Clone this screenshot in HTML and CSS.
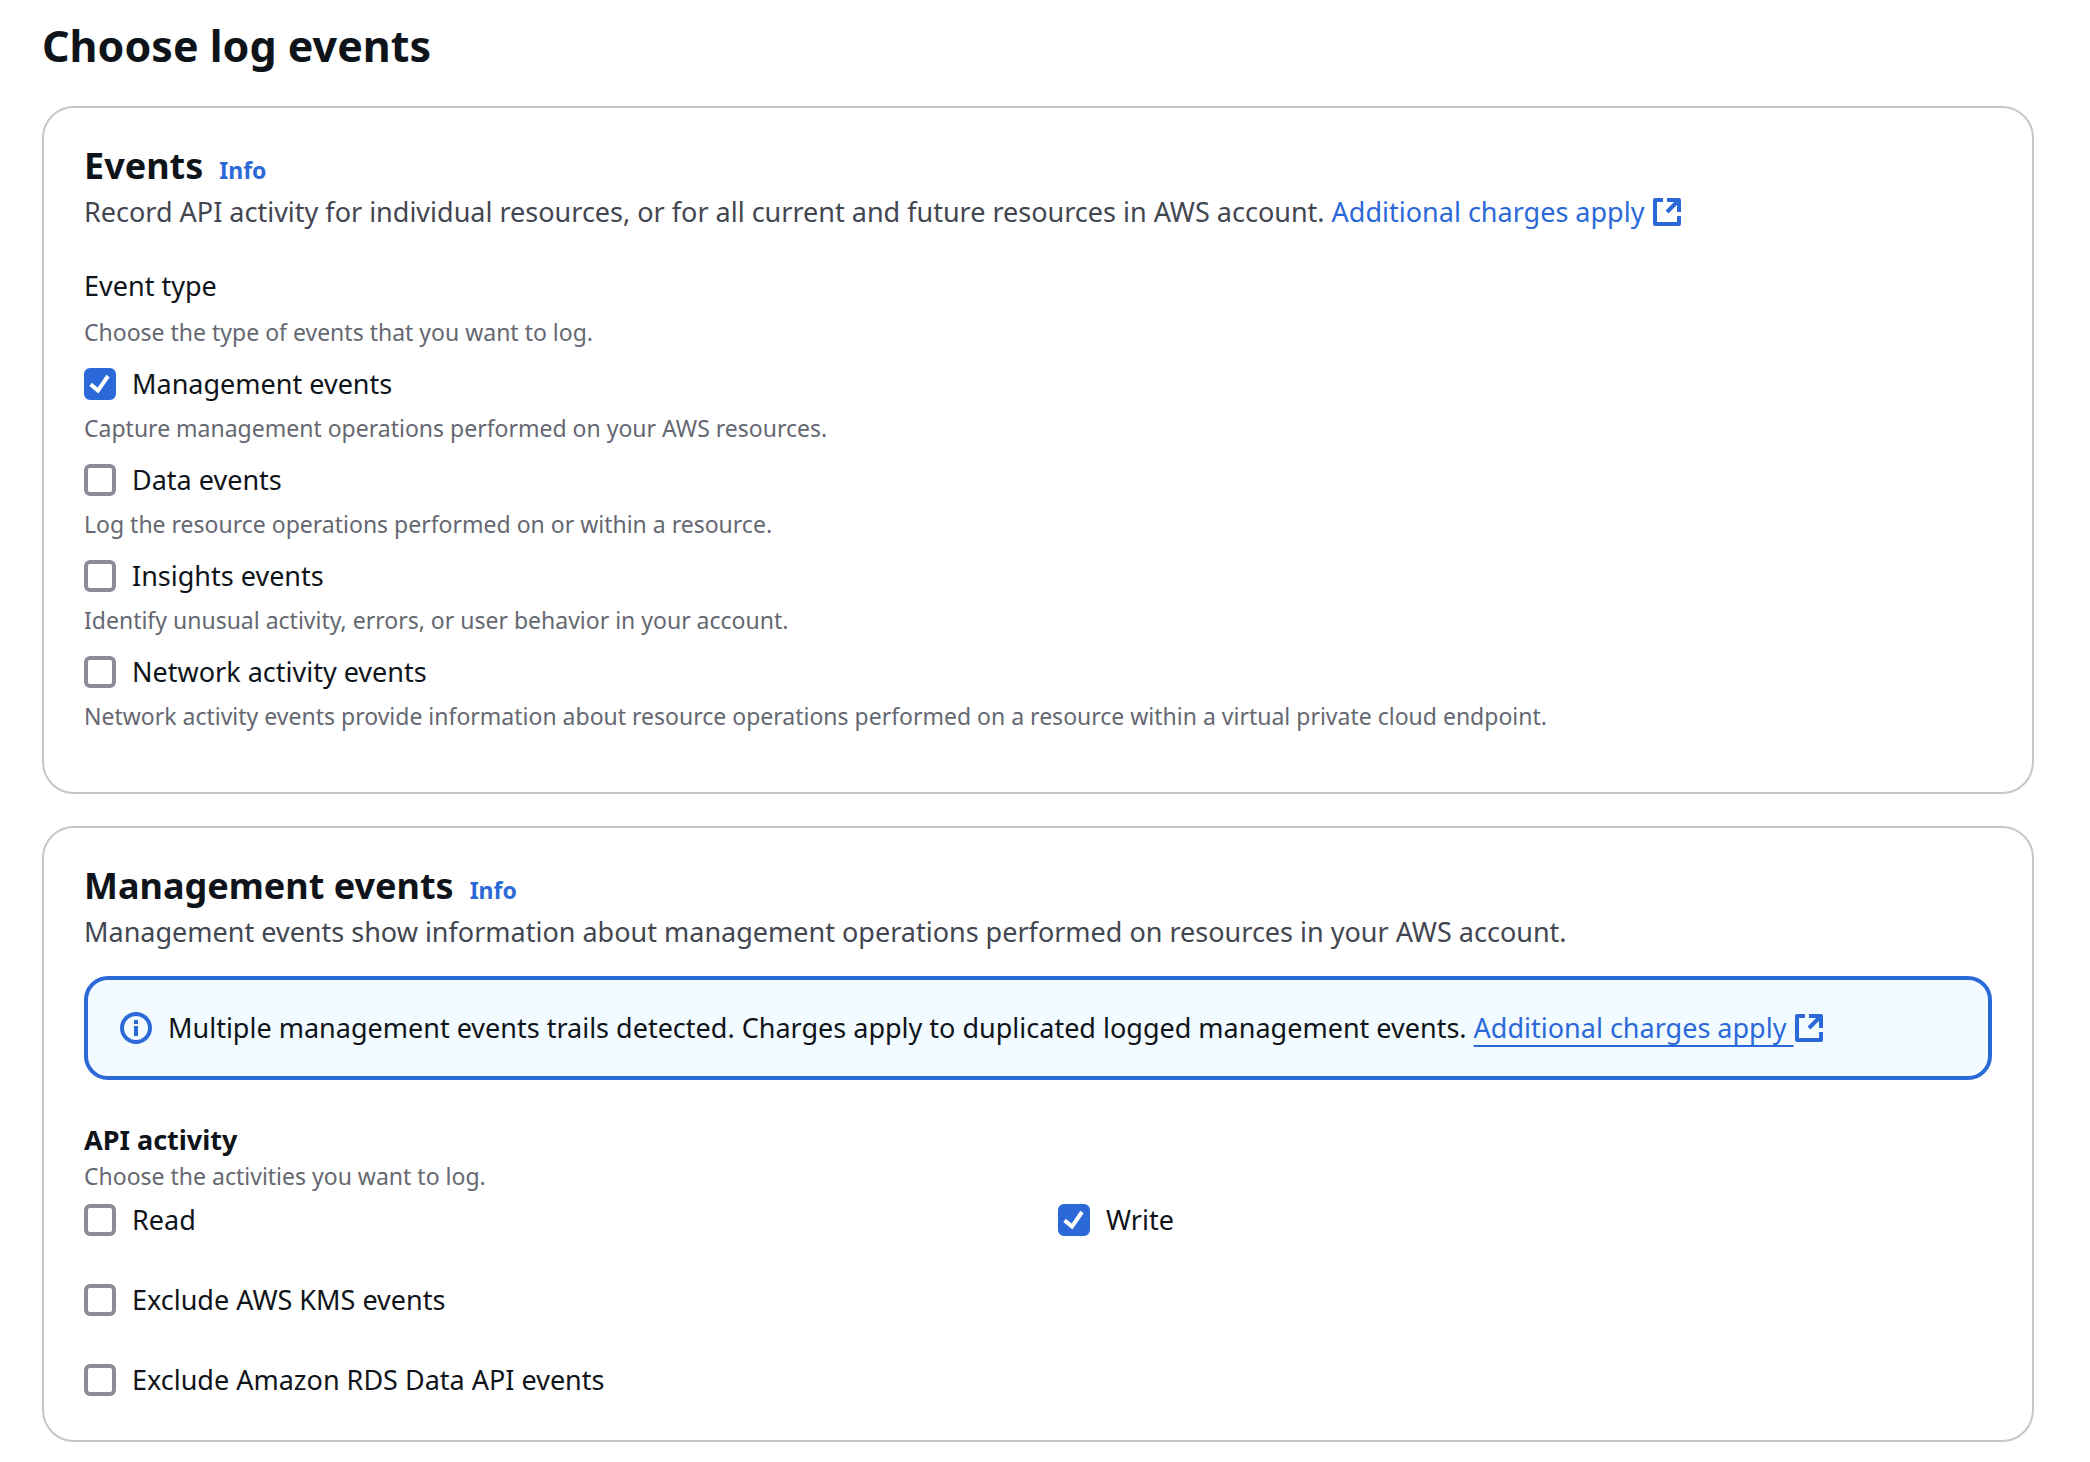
FILE: index.html
```html
<!DOCTYPE html>
<html lang="en">
<head>
    <meta charset="UTF-8">
    <meta name="viewport" content="width=device-width, initial-scale=1.0">
    <title>Choose log events</title>
    <link rel="stylesheet" href="styles.css">
</head>
<body>
    <!-- shared icon -->
    <svg class="sprite" aria-hidden="true">
        <symbol id="external" viewBox="0 0 16 16">
            <path d="M14 8V2H8M6 2H2v12h12v-4M14 2 8 8" fill="none" stroke="currentColor" stroke-width="2" stroke-linejoin="round"/>
        </symbol>
    </svg>

    <main>
        <h1>Choose log events</h1>

        <section class="card events">
            <div class="card-title">
                <h2>Events</h2>
                <a class="info" href="#">Info</a>
            </div>
            <p class="description">Record API activity for individual resources, or for all current and future resources in AWS account. <a class="external" href="#">Additional charges apply&nbsp;<svg class="icon"><use href="#external"/></svg></a></p>

            <fieldset class="event-types">
                <legend>Event type</legend>
                <p class="hint">Choose the type of events that you want to log.</p>
                <div class="option">
                    <label class="check"><input type="checkbox" checked>Management events</label>
                    <p class="hint">Capture management operations performed on your AWS resources.</p>
                </div>
                <div class="option">
                    <label class="check"><input type="checkbox">Data events</label>
                    <p class="hint">Log the resource operations performed on or within a resource.</p>
                </div>
                <div class="option">
                    <label class="check"><input type="checkbox">Insights events</label>
                    <p class="hint">Identify unusual activity, errors, or user behavior in your account.</p>
                </div>
                <div class="option">
                    <label class="check"><input type="checkbox">Network activity events</label>
                    <p class="hint">Network activity events provide information about resource operations performed on a resource within a virtual private cloud endpoint.</p>
                </div>
            </fieldset>
        </section>

        <section class="card">
            <div class="card-title">
                <h2>Management events</h2>
                <a class="info" href="#">Info</a>
            </div>
            <p class="description">Management events show information about management operations performed on resources in your AWS account.</p>

            <div class="alert">
                <svg class="icon" viewBox="0 0 16 16" aria-hidden="true">
                    <circle cx="8" cy="8" r="7" fill="none" stroke="currentColor" stroke-width="2"/>
                    <path d="M8 4v2M8 7v5" fill="none" stroke="currentColor" stroke-width="2"/>
                </svg>
                <p>Multiple management events trails detected. Charges apply to duplicated logged management events. <a class="external" href="#"><span class="underlined">Additional charges apply&nbsp;</span><svg class="icon"><use href="#external"/></svg></a></p>
            </div>

            <fieldset>
                <legend class="strong">API activity</legend>
                <p class="hint">Choose the activities you want to log.</p>
                <div class="activities">
                    <label class="check"><input type="checkbox">Read</label>
                    <label class="check"><input type="checkbox" checked>Write</label>
                    <label class="check wide"><input type="checkbox">Exclude AWS KMS events</label>
                    <label class="check wide"><input type="checkbox">Exclude Amazon RDS Data API events</label>
                </div>
            </fieldset>
        </section>
    </main>
</body>
</html>
```

FILE: styles.css
```css
:root {
    --link: #2b69d8;
    --text: #0f141a;
    --secondary: #424650;
    --hint: #656871;
    --border: #c6c6cd;
    --control: #8c8c94;
}

* {
    margin: 0;
    padding: 0;
    box-sizing: border-box;
}

body {
    background: #fff;
    color: var(--text);
    font-family: "Noto Sans", "Open Sans", sans-serif;
    font-size: 27px;
    line-height: 40px;
}

.sprite {
    display: none;
}

main {
    padding: 16px 56px 20px 42px;
}

h1 {
    font-size: 43px;
    line-height: 60px;
    margin-bottom: 30px;
}

h2 {
    font-size: 36px;
    line-height: 48px;
}

a {
    color: var(--link);
    text-decoration: none;
}

.card {
    border: 2px solid var(--border);
    border-radius: 32px;
    padding: 34px 40px 40px;
    margin-bottom: 32px;
}

.card.events {
    padding-bottom: 60px;
}

.card:last-child {
    margin-bottom: 0;
}

.card-title {
    display: flex;
    align-items: baseline;
    gap: 16px;
    margin-bottom: 2px;
}

.info {
    font-size: 23px;
    font-weight: 700;
    line-height: 32px;
}

.description {
    color: var(--secondary);
}

.icon {
    width: 32px;
    height: 32px;
    flex: none;
}

.external {
    white-space: nowrap;
}

.external .icon {
    vertical-align: -2px;
    margin: -4px 0;
}

.underlined {
    text-decoration: underline;
    text-decoration-thickness: 2px;
    text-underline-offset: 7px;
    text-decoration-skip-ink: none;
}

.hint {
    color: var(--hint);
    font-size: 23px;
    line-height: 32px;
}

fieldset {
    border: none;
}

legend.strong {
    font-weight: 700;
}

.event-types {
    margin-top: 34px;
}

.event-types legend {
    margin-bottom: 10px;
}

.option {
    margin-top: 16px;
}

.option .hint {
    margin-top: 8px;
}

.check {
    display: flex;
    align-items: center;
    gap: 16px;
}

.check input {
    appearance: none;
    width: 32px;
    height: 32px;
    flex: none;
    border: 4px solid var(--control);
    border-radius: 6px;
    background: #fff;
}

.check input:checked {
    border-color: var(--link);
    background: var(--link) url("data:image/svg+xml,%3Csvg xmlns='http://www.w3.org/2000/svg' viewBox='0 0 16 16'%3E%3Cpath d='M3.3 8.2 7 11.3 12 4' fill='none' stroke='white' stroke-width='2'/%3E%3C/svg%3E") center / 32px 32px no-repeat border-box;
}

.alert {
    display: flex;
    align-items: center;
    gap: 16px;
    margin: 24px 0 40px;
    padding: 28px 32px;
    border: 4px solid var(--link);
    border-radius: 24px;
    background: #f2fbff;
}

.alert > .icon {
    color: var(--link);
}

.activities {
    display: grid;
    grid-template-columns: 1fr 1fr;
    gap: 40px;
    margin-top: 8px;
}

.wide {
    grid-column: 1 / -1;
}
```
